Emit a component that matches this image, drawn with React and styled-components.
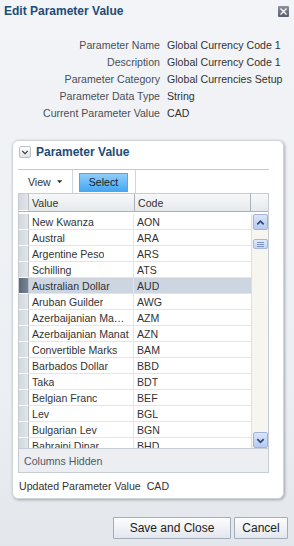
import React from "react";
import styled, { createGlobalStyle } from "styled-components";

const GlobalStyle = createGlobalStyle`
  html, body { margin: 0; padding: 0; }
  body { font-family: "Liberation Sans", Arial, sans-serif; font-size: 10.6px; color: #333; }
  * { box-sizing: border-box; }
`;

const Dialog = styled.div`
  width: 294px;
  height: 546px;
  background: linear-gradient(#f2f4f7 0%, #eceff3 70%, #e3e7ec 100%);
  display: flex;
  flex-direction: column;
  overflow: hidden;
`;

const TitleBar = styled.div`
  height: 22px;
  display: flex;
  align-items: center;
  justify-content: space-between;
  padding: 0 5px 0 4px;
`;

const Title = styled.div`
  font-weight: bold;
  font-size: 12px;
  color: #1d4b78;
`;

const CloseBtn = styled.div`
  width: 11px;
  height: 11px;
  border-radius: 1px;
  background: linear-gradient(#8a929c, #565f6a);
  display: flex;
  align-items: center;
  justify-content: center;
`;

const InfoGrid = styled.div`
  margin-top: 14px;
  display: grid;
  grid-template-columns: 160px auto;
  column-gap: 7px;
  grid-auto-rows: 17px;
  align-items: center;
`;

const Label = styled.div`
  text-align: right;
  color: #4a4f56;
  white-space: nowrap;
`;

const Val = styled.div`
  color: #333;
  white-space: nowrap;
`;

const Panel = styled.div`
  margin: 19px 0 0 12px;
  width: 272px;
  height: 359px;
  background: #fff;
  border: 1px solid #cfd4da;
  border-radius: 6px;
  box-shadow: 1px 1px 3px rgba(0, 0, 0, 0.3);
  padding: 0 0 0 5px;
  display: flex;
  flex-direction: column;
`;

const PanelHeader = styled.div`
  height: 28px;
  display: flex;
  align-items: flex-start;
  gap: 5px;
  padding: 5px 0 0 1px;
`;

const Disclosure = styled.div`
  width: 12px;
  height: 12px;
  border: 1px solid #b9c0c8;
  border-radius: 2px;
  background: linear-gradient(#ffffff, #dfe3e8);
  display: flex;
  align-items: center;
  justify-content: center;
`;

const PanelTitle = styled.div`
  font-weight: bold;
  font-size: 12px;
  line-height: 12px;
  color: #1d4b78;
`;

const Toolbar = styled.div`
  width: 251px;
  height: 24px;
  border-top: 1px solid #bccadb;
  display: flex;
  align-items: stretch;
`;

const ToolItem = styled.div`
  display: flex;
  align-items: center;
  padding: 0 ${(p) => p.$pad || 6}px;
  width: ${(p) => (p.$w ? `${p.$w}px` : "auto")};
  border-right: ${(p) => (p.$sep ? "1px solid #cfd6de" : "none")};
  gap: 6px;
  color: #333;
`;

const SelectButton = styled.div`
  width: 49px;
  height: 19px;
  margin-top: 1px;
  border: 1px solid #5ca2dc;
  background: linear-gradient(#8fcdfb, #45a8f4);
  display: flex;
  align-items: center;
  justify-content: center;
  color: #1b1b1b;
`;

const Table = styled.div`
  width: 251px;
  border: 1px solid #c6ccd3;
  border-top: none;
  display: flex;
  flex-direction: column;
`;

const HeaderRow = styled.div`
  height: 19px;
  display: flex;
  background: linear-gradient(#f7f8f9, #e6e9ec);
  border-top: 1px solid #c6ccd3;
  border-bottom: 1px solid #a9b1ba;
`;

const RowHead = styled.div`
  width: 10px;
  flex: none;
  background: ${(p) =>
    p.$sel
      ? "linear-gradient(90deg, #5d6877, #7a8594)"
      : "linear-gradient(90deg, #d3d8de, #e2e5e9)"};
  border-bottom: 1px solid #fff;
  border-right: 1px solid #b7bec6;
`;

const HeadCell = styled.div`
  width: ${(p) => p.$w}px;
  flex: none;
  padding-left: 3px;
  display: flex;
  align-items: center;
  border-right: 1px solid #a9b1ba;
  color: #333;
`;

const BodyWrap = styled.div`
  margin-top: 2px;
  height: 234px;
  display: flex;
  overflow: hidden;
`;

const Rows = styled.div`
  width: 232px;
  flex: none;
  overflow: hidden;
`;

const Row = styled.div`
  height: 16px;
  display: flex;
  background: ${(p) => (p.$sel ? "#cdd5e1" : "#fff")};
`;

const Cell = styled.div`
  width: ${(p) => p.$w}px;
  flex: none;
  padding: 0 3px;
  display: flex;
  align-items: center;
  border-bottom: 1px solid #e2e5e9;
  border-right: ${(p) => (p.$last ? "none" : "1px solid #e2e5e9")};
  white-space: nowrap;
  overflow: hidden;
  color: #333;
`;

const CellText = styled.span`
  overflow: hidden;
  text-overflow: ellipsis;
  white-space: nowrap;
`;

const ScrollBar = styled.div`
  width: 17px;
  flex: none;
  background: #f6f5ef;
  border-left: 1px solid #dcdfe3;
  display: flex;
  flex-direction: column;
  align-items: center;
  justify-content: space-between;
`;

const ScrollTop = styled.div`
  display: flex;
  flex-direction: column;
  align-items: center;
  gap: 9px;
`;

const ScrollBtn = styled.div`
  width: 15px;
  height: 16px;
  border: 1px solid #9fb3dc;
  border-radius: 2px;
  background: linear-gradient(#dbe5f9, #b7caf0);
  display: flex;
  align-items: center;
  justify-content: center;
`;

const Thumb = styled.div`
  width: 15px;
  height: 10px;
  border: 1px solid #a6b8dd;
  border-radius: 2px;
  background: linear-gradient(#e3ebfa, #c4d4f3);
  display: flex;
  flex-direction: column;
  align-items: center;
  justify-content: center;
  gap: 1px;
`;

const Grip = styled.div`
  width: 7px;
  height: 1px;
  background: #7d96c8;
`;

const Footer = styled.div`
  height: 24px;
  background: #eceef1;
  border-top: 1px solid #c6ccd3;
  display: flex;
  align-items: center;
  padding-left: 5px;
  color: #4c5a6a;
`;

const Updated = styled.div`
  margin-top: 7px;
  padding-left: 1px;
  display: flex;
  gap: 6px;
  color: #333;
`;

const ButtonBar = styled.div`
  margin-top: 18px;
  display: flex;
  justify-content: flex-end;
  gap: 3px;
  padding-right: 6px;
`;

const Button = styled.div`
  width: ${(p) => p.$w}px;
  height: 22px;
  border: 1px solid #a3adba;
  border-radius: 1px;
  background: linear-gradient(#fdfdfe, #e3e7ed);
  display: flex;
  align-items: center;
  justify-content: center;
  font-size: 12px;
  color: #222;
`;

const rows = [
  ["New Kwanza", "AON"],
  ["Austral", "ARA"],
  ["Argentine Peso", "ARS"],
  ["Schilling", "ATS"],
  ["Australian Dollar", "AUD", true],
  ["Aruban Guilder", "AWG"],
  ["Azerbaijanian Manat (old)", "AZM"],
  ["Azerbaijanian Manat", "AZN"],
  ["Convertible Marks", "BAM"],
  ["Barbados Dollar", "BBD"],
  ["Taka", "BDT"],
  ["Belgian Franc", "BEF"],
  ["Lev", "BGL"],
  ["Bulgarian Lev", "BGN"],
  ["Bahraini Dinar", "BHD"],
];

const info = [
  ["Parameter Name", "Global Currency Code 1"],
  ["Description", "Global Currency Code 1"],
  ["Parameter Category", "Global Currencies Setup"],
  ["Parameter Data Type", "String"],
  ["Current Parameter Value", "CAD"],
];

const Chevron = ({ up, size = 9, color = "#2c4a7e", w = 2 }) => (
  <svg width={size} height={size} viewBox="0 0 10 10">
    <path
      d={up ? "M1.5 7 L5 3.5 L8.5 7" : "M1.5 3.5 L5 7 L8.5 3.5"}
      fill="none"
      stroke={color}
      strokeWidth={w}
    />
  </svg>
);

export default function App() {
  return (
    <>
      <GlobalStyle />
      <Dialog>
        <TitleBar>
          <Title>Edit Parameter Value</Title>
          <CloseBtn>
            <svg width="7" height="7" viewBox="0 0 7 7">
              <path d="M0.5 0.5 L6.5 6.5 M6.5 0.5 L0.5 6.5" stroke="#fff" strokeWidth="1.4" />
            </svg>
          </CloseBtn>
        </TitleBar>

        <InfoGrid>
          {info.map(([l, v]) => (
            <React.Fragment key={l}>
              <Label>{l}</Label>
              <Val>{v}</Val>
            </React.Fragment>
          ))}
        </InfoGrid>

        <Panel>
          <PanelHeader>
            <Disclosure>
              <Chevron size={8} color="#333" w={1.4} />
            </Disclosure>
            <PanelTitle>Parameter Value</PanelTitle>
          </PanelHeader>

          <Toolbar>
            <ToolItem $w={55} $pad={10} $sep>
              View
              <svg width="6" height="4" viewBox="0 0 6 4">
                <path d="M0 0 H6 L3 3.5 Z" fill="#333" />
              </svg>
            </ToolItem>
            <ToolItem $w={63} $sep>
              <SelectButton>Select</SelectButton>
            </ToolItem>
          </Toolbar>

          <Table>
            <HeaderRow>
              <RowHead />
              <HeadCell $w={106}>Value</HeadCell>
              <HeadCell $w={116}>Code</HeadCell>
            </HeaderRow>
            <BodyWrap>
              <Rows>
                {rows.map(([v, c, sel]) => (
                  <Row key={c} $sel={sel}>
                    <RowHead $sel={sel} />
                    <Cell $w={105}>
                      <CellText>{v}</CellText>
                    </Cell>
                    <Cell $w={117} $last>
                      <CellText>{c}</CellText>
                    </Cell>
                  </Row>
                ))}
              </Rows>
              <ScrollBar>
                <ScrollTop>
                  <ScrollBtn>
                    <Chevron up />
                  </ScrollBtn>
                  <Thumb>
                    <Grip />
                    <Grip />
                    <Grip />
                  </Thumb>
                </ScrollTop>
                <ScrollBtn>
                  <Chevron />
                </ScrollBtn>
              </ScrollBar>
            </BodyWrap>
            <Footer>Columns Hidden</Footer>
          </Table>

          <Updated>
            <span>Updated Parameter Value</span>
            <span>CAD</span>
          </Updated>
        </Panel>

        <ButtonBar>
          <Button $w={118}>Save and Close</Button>
          <Button $w={54}>Cancel</Button>
        </ButtonBar>
      </Dialog>
    </>
  );
}
